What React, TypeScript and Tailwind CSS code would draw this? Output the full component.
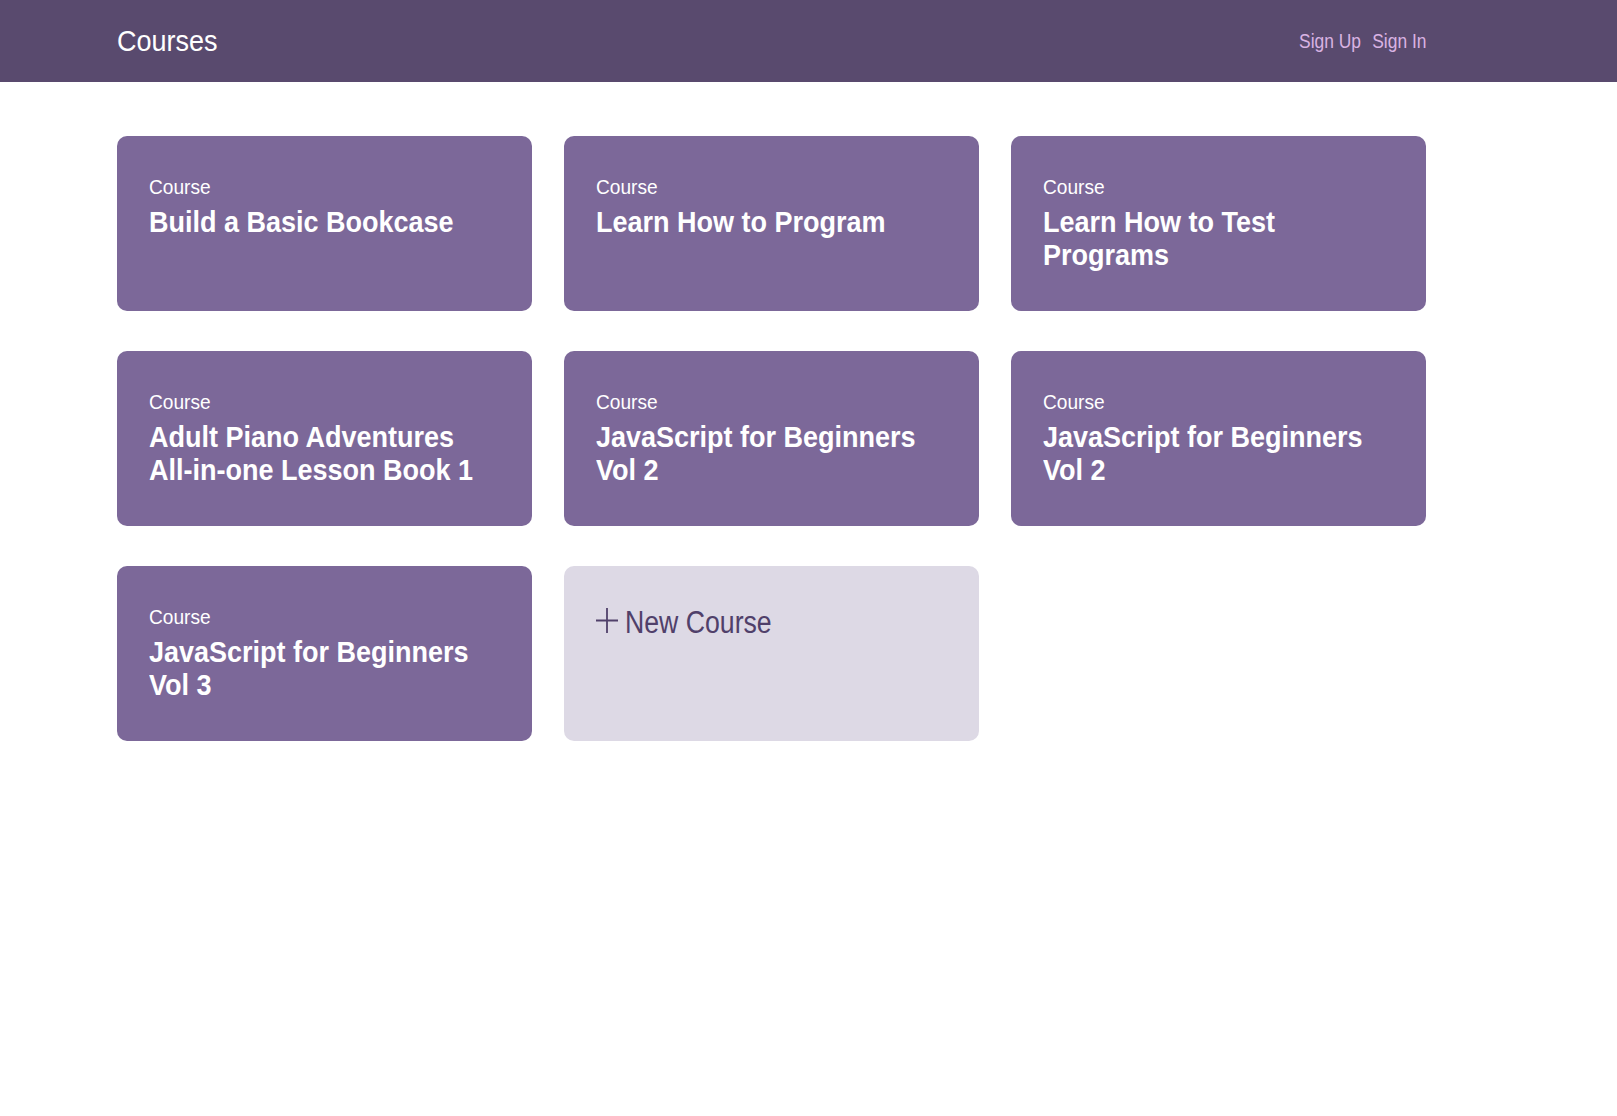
const courses = [
  "Build a Basic Bookcase",
  "Learn How to Program",
  "Learn How to Test Programs",
  "Adult Piano Adventures All-in-one Lesson Book 1",
  "JavaScript for Beginners Vol 2",
  "JavaScript for Beginners Vol 2",
  "JavaScript for Beginners Vol 3",
];

const CourseCard = ({ title }: { title: string }) => {
  return (
    <a href="#" className="block h-[175px] rounded-[10px] bg-[#7c6899] px-8 pt-[38px] text-white">
      <div className="w-[380px] origin-left scale-x-[0.91] text-[21px] leading-[26px]">Course</div>
      <h3 className="mt-[5px] w-[389px] origin-left scale-x-[0.9] text-[30px] font-bold leading-[33px]">
        {title}
      </h3>
    </a>
  );
};

export default function App() {
  return (
    <div className="min-h-screen bg-white font-['Liberation_Sans',Arial,sans-serif]">
      <header className="h-[82px] bg-[#594a6e]">
        <div className="box-content flex h-full w-[1309px] items-center justify-between pl-[117px]">
          <h1 className="origin-left scale-x-[0.9] text-[30px] leading-[36px] text-white">Courses</h1>
          <nav className="flex origin-right scale-x-[0.87] gap-[13px] text-[20px] leading-[24px] text-[#d9b3e3]">
            <a href="#">Sign Up</a>
            <a href="#">Sign In</a>
          </nav>
        </div>
      </header>

      <main className="pl-[117px] pt-[54px]">
        <div className="grid w-[1309px] grid-cols-3 gap-x-8 gap-y-[40px]">
          {courses.map((title, i) => (
            <CourseCard key={i} title={title} />
          ))}
          <a href="#" className="flex h-[175px] items-start rounded-[10px] bg-[#ddd9e5] px-8 pt-[39px] text-[#50406a]">
            <svg width="22" height="25" viewBox="0 0 22 25" className="mr-[7px] mt-[3px] shrink-0" fill="none" stroke="currentColor" strokeWidth="1.8">
              <path d="M11 0v25M0 12.5h22" />
            </svg>
            <span className="origin-left scale-x-[0.86] whitespace-nowrap text-[31px] leading-[36px]">New Course</span>
          </a>
        </div>
      </main>
    </div>
  );
}
